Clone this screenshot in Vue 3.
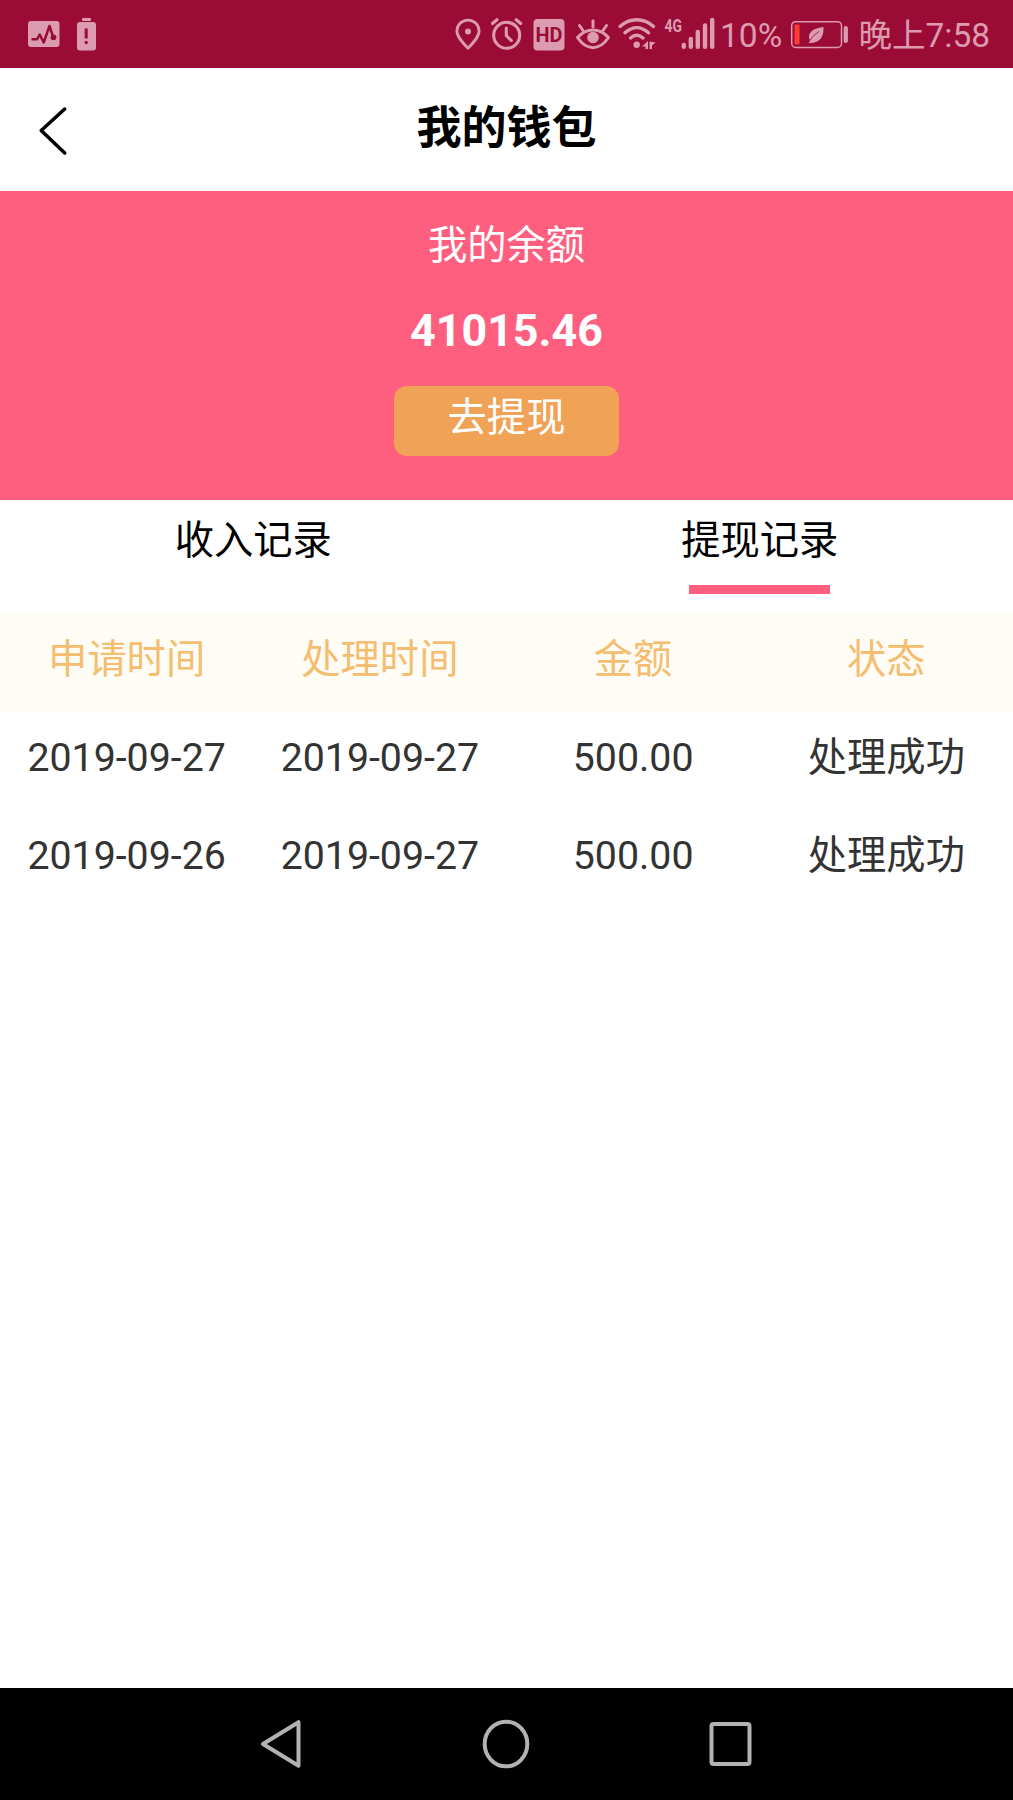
<script setup>
const columns = ['申请时间', '处理时间', '金额', '状态']
const records = [
  ['2019-09-27', '2019-09-27', '500.00', '处理成功'],
  ['2019-09-26', '2019-09-27', '500.00', '处理成功'],
]
</script>

<template>
  <div class="screen">
    <div class="status">
      <svg class="activity" width="34" height="67" viewBox="27 0 34 67">
        <rect x="28" y="21" width="31.5" height="26" rx="3" fill="#dc9bb0" />
        <path d="M31.500 39.300H37L39.700 34.500L43.700 42.500L49.500 26L53 36.500" fill="none" stroke="#9a0c35" stroke-width="2.500" stroke-linejoin="round" />
        <circle cx="53.500" cy="37.300" r="2.900" fill="#9a0c35" />
      </svg>
      <svg class="low" width="21" height="67" viewBox="75.500 0 21 67">
        <rect x="81.500" y="18" width="9" height="3" rx="1" fill="#dc9bb0" />
        <rect x="76.500" y="22" width="19" height="28.500" rx="3" fill="#dc9bb0" />
        <path d="M85.700 28.500V38.500" stroke="#9a0c35" stroke-width="3" />
        <circle cx="85.700" cy="42.500" r="1.700" fill="#9a0c35" />
      </svg>
      <div class="tray">
        <svg width="28" height="67" viewBox="454 0 28 67" fill="none" stroke="#dc9bb0" stroke-width="2.800">
          <path d="M468 48.300C462 42 456.900 36.500 456.900 31a11.100 10.800 0 0 1 22.200 0C479.100 36.500 474 42 468 48.300z" stroke-linejoin="round" />
          <circle cx="468" cy="31.500" r="3" fill="#dc9bb0" stroke="none" />
        </svg>
        <svg class="alarm" width="34" height="67" viewBox="490 0 34 67" fill="none" stroke="#dc9bb0" stroke-width="3.100" stroke-linecap="round">
          <circle cx="506.700" cy="35.300" r="13" />
          <path d="M506.300 28v7.500l5 5M492.500 23.500l4.500-3.800M520.700 23.500l-4.500-3.800" />
        </svg>
        <svg class="hd" width="32" height="67" viewBox="533 0 32 67">
          <rect x="533.500" y="19" width="31" height="31.500" rx="4" fill="#dc9bb0" />
          <text x="549" y="41.500" text-anchor="middle" textLength="27" lengthAdjust="spacingAndGlyphs" class="hd-text">HD</text>
        </svg>
        <svg class="eye" width="36" height="67" viewBox="574.500 0 36 67" fill="none" stroke="#dc9bb0" stroke-width="3" stroke-linecap="round">
          <path d="M577 37.500C586 27.500 599 27.500 608 37.500C599 51 586 51 577 37.500z" stroke-linejoin="round" />
          <circle cx="592.500" cy="37.500" r="5.800" fill="#dc9bb0" stroke="none" />
          <path d="M592.500 20.800v6M579 25.500l3.500 5M606 25.500l-3.500 5" />
        </svg>
        <svg class="wifi" width="38" height="67" viewBox="618 0 38 67" fill="none" stroke="#dc9bb0" stroke-width="3.300" stroke-linecap="round">
          <path d="M620 26.500C630 17.500 643.500 17.500 653.500 26.500M625 32.800C632.500 26 641 26 648.500 32.800M630.500 38C634.500 34.500 639 34.500 643 38" />
          <circle cx="636.700" cy="44.700" r="3.200" fill="#dc9bb0" stroke="none" />
          <path d="M648 41v8h-2.500v-2.500H642zM649.500 41.500l6 1-3.500 3V49h-2.500z" fill="#dc9bb0" stroke="none" />
        </svg>
        <svg class="signal" width="52" height="67" viewBox="664 0 52 67" fill="none" stroke="#dc9bb0" stroke-width="4.400" stroke-linecap="round">
          <text x="664.500" y="31.800" textLength="17.500" lengthAdjust="spacingAndGlyphs" class="net">4G</text>
          <path d="M683.800 45v1.800M690.800 39v7.800M697.800 32v14.800M705 25.500V46.800M712.200 20V46.800" />
        </svg>
        <span class="percent">10%</span>
        <svg class="battery" width="60" height="67" viewBox="790 0 60 67" fill="none">
          <rect x="791.700" y="21.700" width="49.800" height="25.800" rx="4" stroke="#dc9bb0" stroke-width="1.500" />
          <rect x="794.500" y="24.500" width="5" height="20" rx="1" fill="#ff3b30" />
          <rect x="843.700" y="26" width="4.200" height="17" rx="2" fill="#dc9bb0" />
          <path d="M823.500 27C815 28 808.500 31 809 38l1 2L808.500 43C820 43.500 824 37 823.500 27z" fill="#dc9bb0" />
          <path d="M808.500 42.500Q812 35.500 819 31.500" stroke="#9a0c35" stroke-width=".8" />
        </svg>
        <span class="time">晚上7:58</span>
      </div>
    </div>

    <header class="header">
      <svg class="back" width="30" height="52" viewBox="0 0 30 52" fill="none">
        <path d="M26.700 4L3.200 25.500L26.700 48" stroke="#000" stroke-width="3.500" stroke-linecap="round" stroke-linejoin="round" />
      </svg>
      <h1>我的钱包</h1>
    </header>

    <section class="balance">
      <div class="label">我的余额</div>
      <div class="amount">41015.46</div>
      <button class="withdraw">去提现</button>
    </section>

    <nav class="tabs">
      <div class="tab">收入记录</div>
      <div class="tab active">提现记录</div>
    </nav>

    <div class="row head">
      <span v-for="c in columns" :key="c">{{ c }}</span>
    </div>
    <div v-for="(r, i) in records" :key="i" class="row">
      <span v-for="(v, j) in r" :key="j">{{ v }}</span>
    </div>

    <footer class="navbar">
      <svg width="42" height="52" viewBox="0 0 42 52"><path d="M38.500 4.200V47.800L3 26z" /></svg>
      <svg class="home" width="50" height="52" viewBox="0 0 50 52"><ellipse cx="25" cy="26" rx="21.300" ry="22.300" /></svg>
      <svg class="recent" width="44" height="52" viewBox="0 0 44 52"><rect x="2.500" y="6" width="38" height="40" rx="2" /></svg>
    </footer>
  </div>
</template>

<style>
body {
  margin: 0;
  background: #fff;
}
</style>

<style scoped>
.screen {
  width: 1013px;
  height: 1800px;
  display: flex;
  flex-direction: column;
  overflow: hidden;
  background: #fff;
  font-family: Roboto, "Noto Sans CJK SC", sans-serif;
  font-size: 39.300px;
  color: #333;
}
svg {
  display: block;
  flex: none;
}
.status {
  height: 67.500px;
  flex: none;
  display: flex;
  background: #9a0c35;
  color: #dc9bb0;
}
.activity { margin-left: 27px; }
.low { margin-left: 14.500px; }
.tray {
  display: flex;
  margin-left: 357.500px;
}
.alarm { margin-left: 8px; }
.hd { margin-left: 9px; }
.eye { margin-left: 9.500px; }
.wifi { margin-left: 7.500px; }
.signal { margin-left: 8px; }
.hd-text {
  font: 700 20.500px Roboto, sans-serif;
  fill: #9a0c35;
}
.net {
  font: 700 18.500px Roboto, sans-serif;
  fill: #dc9bb0;
  stroke: none;
}
.percent,
.time {
  font-size: 33.500px;
  line-height: 71px;
  white-space: nowrap;
}
.percent {
  width: 69px;
  margin-left: 4px;
}
.battery { margin-left: 1px; }
.time { margin-left: 8.500px; }
.header {
  height: 123.500px;
  flex: none;
  display: grid;
  grid-template-columns: 100px 1fr 100px;
}
.back {
  margin: 37.500px 0 0 38px;
}
h1 {
  margin: 0;
  text-align: center;
  font-size: 45px;
  font-weight: 700;
  line-height: 122px;
  color: #000;
}
.balance {
  height: 309px;
  flex: none;
  display: flex;
  flex-direction: column;
  align-items: center;
  background: #ff5f7f;
  color: #fff;
}
.label {
  height: 60px;
  margin-top: 25px;
  line-height: 60px;
}
.amount {
  height: 60px;
  margin-top: 25px;
  font-size: 44.800px;
  font-weight: 700;
  line-height: 60px;
}
.withdraw {
  width: 225px;
  height: 70.500px;
  margin-top: 24.500px;
  padding: 0 0 5px;
  border: 0;
  border-radius: 13px;
  background: #f0a257;
  color: #fff;
  font: inherit;
  line-height: 65px;
}
.tabs {
  height: 113.500px;
  flex: none;
  display: flex;
}
.tab {
  flex: 1;
  display: flex;
  flex-direction: column;
  align-items: center;
  color: #000;
  line-height: 82px;
}
.active::after {
  content: "";
  width: 141px;
  height: 8.500px;
  margin-top: 3px;
  background: #ff5f7f;
}
.row {
  height: 98.300px;
  flex: none;
  display: grid;
  grid-template-columns: repeat(4, 1fr);
  text-align: center;
  line-height: 92px;
}
.head {
  background: #fffcf5;
  color: #f4bd70;
}
.navbar {
  height: 112px;
  flex: none;
  box-sizing: border-box;
  margin-top: auto;
  padding: 29.500px 0 0 260px;
  display: flex;
  align-items: flex-start;
  background: #000;
}
.navbar svg {
  fill: none;
  stroke: #b2b2b2;
  stroke-width: 4;
  stroke-linejoin: round;
}
.navbar .home { margin-left: 179px; }
.navbar .recent { margin-left: 178px; }
</style>
